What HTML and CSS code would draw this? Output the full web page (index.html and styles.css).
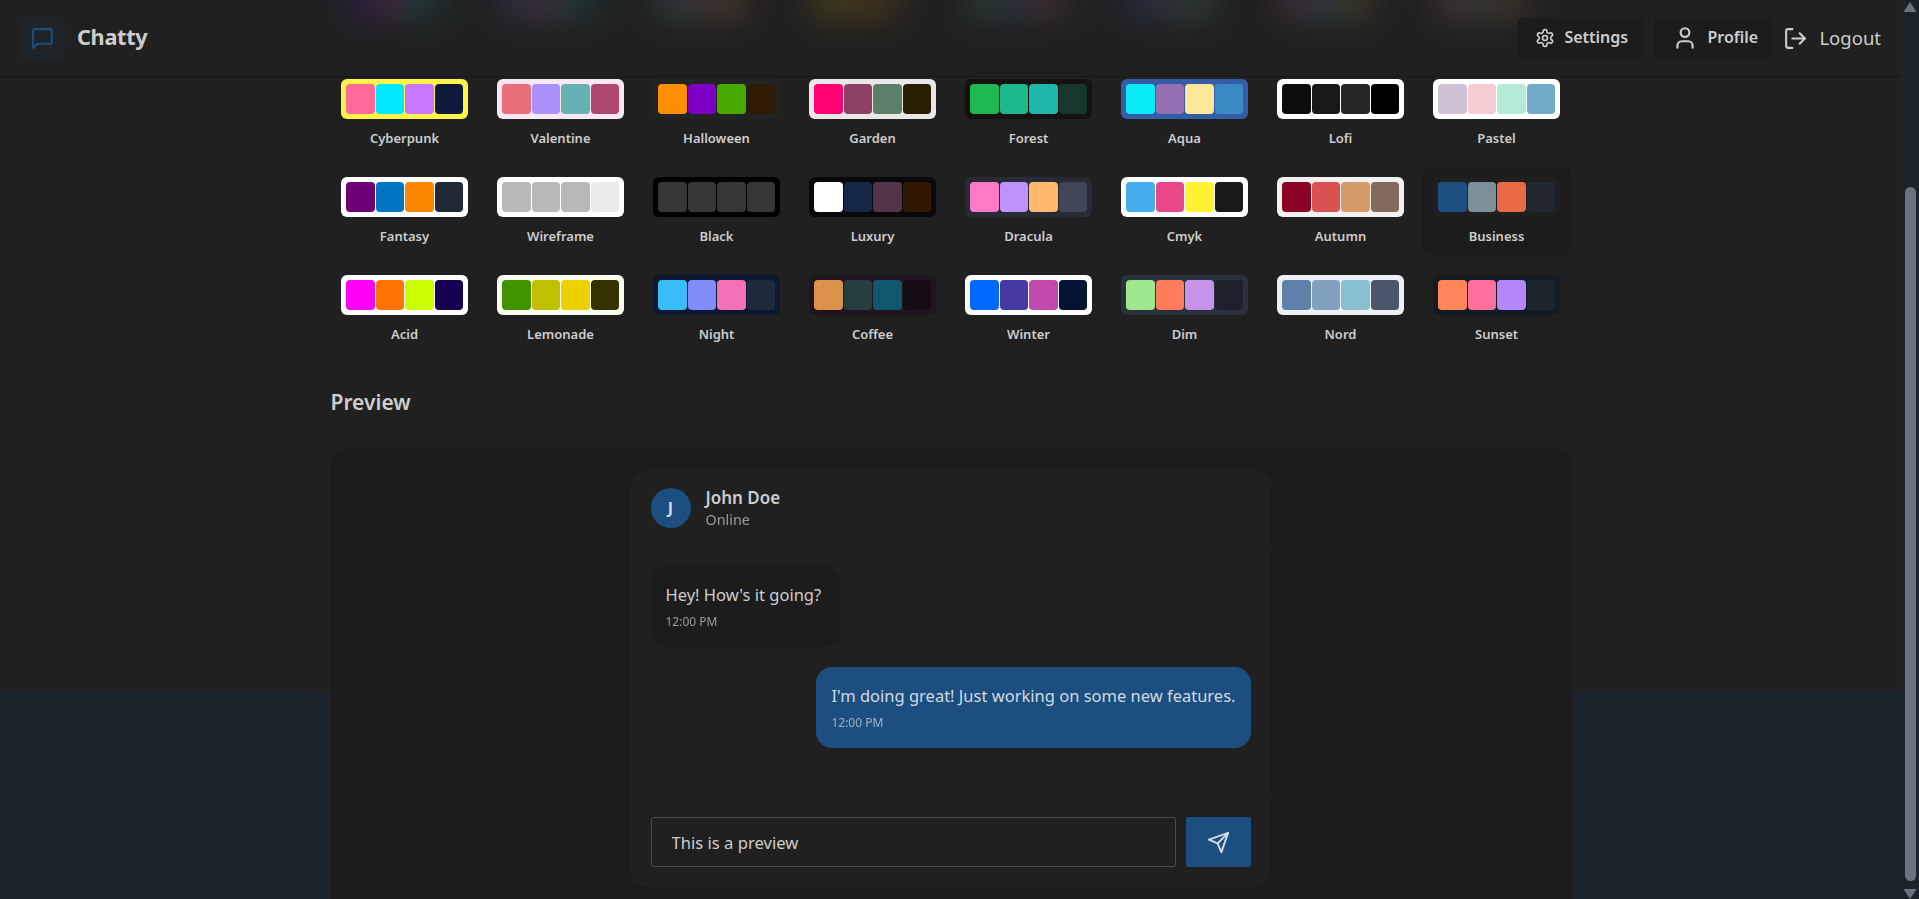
FILE: index.html
```html
<!DOCTYPE html>
<html lang="en">
<head>
    <meta charset="UTF-8">
    <meta name="viewport" content="width=device-width, initial-scale=1.0">
    <title>Chatty</title>
    <link rel="stylesheet" href="styles.css">
</head>
<body>
    <div class="window">
        <header class="navbar">
            <a class="brand" href="#">
                <span class="brand-icon">
                    <svg width="25" height="25" viewBox="0 0 24 24" fill="none" stroke="currentColor" stroke-width="2" stroke-linecap="round" stroke-linejoin="round"><path d="M21 15a2 2 0 0 1-2 2H7l-4 4V5a2 2 0 0 1 2-2h14a2 2 0 0 1 2 2z"/></svg>
                </span>
                <span class="brand-name">Chatty</span>
            </a>
            <nav class="nav-links">
                <a class="nav-btn nav-settings" href="#">
                    <svg width="20" height="20" viewBox="0 0 24 24" fill="none" stroke="currentColor" stroke-width="2" stroke-linecap="round" stroke-linejoin="round"><path d="M12.22 2h-.44a2 2 0 0 0-2 2v.18a2 2 0 0 1-1 1.73l-.43.25a2 2 0 0 1-2 0l-.15-.08a2 2 0 0 0-2.73.73l-.22.38a2 2 0 0 0 .73 2.73l.15.1a2 2 0 0 1 1 1.72v.51a2 2 0 0 1-1 1.74l-.15.09a2 2 0 0 0-.73 2.73l.22.38a2 2 0 0 0 2.73.73l.15-.08a2 2 0 0 1 2 0l.43.25a2 2 0 0 1 1 1.73V20a2 2 0 0 0 2 2h.44a2 2 0 0 0 2-2v-.18a2 2 0 0 1 1-1.73l.43-.25a2 2 0 0 1 2 0l.15.08a2 2 0 0 0 2.73-.73l.22-.39a2 2 0 0 0-.73-2.73l-.15-.08a2 2 0 0 1-1-1.74v-.5a2 2 0 0 1 1-1.74l.15-.09a2 2 0 0 0 .73-2.73l-.22-.38a2 2 0 0 0-2.73-.73l-.15.08a2 2 0 0 1-2 0l-.43-.25a2 2 0 0 1-1-1.73V4a2 2 0 0 0-2-2z"/><circle cx="12" cy="12" r="3"/></svg>
                    <span>Settings</span>
                </a>
                <a class="nav-btn nav-profile" href="#">
                    <svg width="26" height="26" viewBox="0 0 24 24" fill="none" stroke="currentColor" stroke-width="2" stroke-linecap="round" stroke-linejoin="round"><path d="M19 21v-2a4 4 0 0 0-4-4H9a4 4 0 0 0-4 4v2"/><circle cx="12" cy="7" r="4"/></svg>
                    <span>Profile</span>
                </a>
                <a class="nav-logout" href="#">
                    <svg width="25" height="25" viewBox="0 0 24 24" fill="none" stroke="currentColor" stroke-width="2" stroke-linecap="round" stroke-linejoin="round"><path d="M9 21H5a2 2 0 0 1-2-2V5a2 2 0 0 1 2-2h4"/><polyline points="16 17 21 12 16 7"/><line x1="21" y1="12" x2="9" y2="12"/></svg>
                    <span>Logout</span>
                </a>
            </nav>
        </header>

        <main class="content">
            <!-- row scrolled away under the navbar, only its blur is visible -->
            <div class="theme-grid theme-grid-under" aria-hidden="true">
                <div class="theme theme-light"><span class="swatch"><i></i><i></i><i></i><i></i></span><span class="theme-name"></span></div>
                <div class="theme theme-dark"><span class="swatch"><i></i><i></i><i></i><i></i></span><span class="theme-name"></span></div>
                <div class="theme theme-cupcake"><span class="swatch"><i></i><i></i><i></i><i></i></span><span class="theme-name"></span></div>
                <div class="theme theme-bumblebee"><span class="swatch"><i></i><i></i><i></i><i></i></span><span class="theme-name"></span></div>
                <div class="theme theme-emerald"><span class="swatch"><i></i><i></i><i></i><i></i></span><span class="theme-name"></span></div>
                <div class="theme theme-corporate"><span class="swatch"><i></i><i></i><i></i><i></i></span><span class="theme-name"></span></div>
                <div class="theme theme-synthwave"><span class="swatch"><i></i><i></i><i></i><i></i></span><span class="theme-name"></span></div>
                <div class="theme theme-retro"><span class="swatch"><i></i><i></i><i></i><i></i></span><span class="theme-name"></span></div>
            </div>
            <div class="theme-grid">
                <div class="theme theme-cyberpunk"><span class="swatch"><i></i><i></i><i></i><i></i></span><span class="theme-name">Cyberpunk</span></div>
                <div class="theme theme-valentine"><span class="swatch"><i></i><i></i><i></i><i></i></span><span class="theme-name">Valentine</span></div>
                <div class="theme theme-halloween"><span class="swatch"><i></i><i></i><i></i><i></i></span><span class="theme-name">Halloween</span></div>
                <div class="theme theme-garden"><span class="swatch"><i></i><i></i><i></i><i></i></span><span class="theme-name">Garden</span></div>
                <div class="theme theme-forest"><span class="swatch"><i></i><i></i><i></i><i></i></span><span class="theme-name">Forest</span></div>
                <div class="theme theme-aqua"><span class="swatch"><i></i><i></i><i></i><i></i></span><span class="theme-name">Aqua</span></div>
                <div class="theme theme-lofi"><span class="swatch"><i></i><i></i><i></i><i></i></span><span class="theme-name">Lofi</span></div>
                <div class="theme theme-pastel"><span class="swatch"><i></i><i></i><i></i><i></i></span><span class="theme-name">Pastel</span></div>
                <div class="theme theme-fantasy"><span class="swatch"><i></i><i></i><i></i><i></i></span><span class="theme-name">Fantasy</span></div>
                <div class="theme theme-wireframe"><span class="swatch"><i></i><i></i><i></i><i></i></span><span class="theme-name">Wireframe</span></div>
                <div class="theme theme-black"><span class="swatch"><i></i><i></i><i></i><i></i></span><span class="theme-name">Black</span></div>
                <div class="theme theme-luxury"><span class="swatch"><i></i><i></i><i></i><i></i></span><span class="theme-name">Luxury</span></div>
                <div class="theme theme-dracula"><span class="swatch"><i></i><i></i><i></i><i></i></span><span class="theme-name">Dracula</span></div>
                <div class="theme theme-cmyk"><span class="swatch"><i></i><i></i><i></i><i></i></span><span class="theme-name">Cmyk</span></div>
                <div class="theme theme-autumn"><span class="swatch"><i></i><i></i><i></i><i></i></span><span class="theme-name">Autumn</span></div>
                <div class="theme theme-business active"><span class="swatch"><i></i><i></i><i></i><i></i></span><span class="theme-name">Business</span></div>
                <div class="theme theme-acid"><span class="swatch"><i></i><i></i><i></i><i></i></span><span class="theme-name">Acid</span></div>
                <div class="theme theme-lemonade"><span class="swatch"><i></i><i></i><i></i><i></i></span><span class="theme-name">Lemonade</span></div>
                <div class="theme theme-night"><span class="swatch"><i></i><i></i><i></i><i></i></span><span class="theme-name">Night</span></div>
                <div class="theme theme-coffee"><span class="swatch"><i></i><i></i><i></i><i></i></span><span class="theme-name">Coffee</span></div>
                <div class="theme theme-winter"><span class="swatch"><i></i><i></i><i></i><i></i></span><span class="theme-name">Winter</span></div>
                <div class="theme theme-dim"><span class="swatch"><i></i><i></i><i></i><i></i></span><span class="theme-name">Dim</span></div>
                <div class="theme theme-nord"><span class="swatch"><i></i><i></i><i></i><i></i></span><span class="theme-name">Nord</span></div>
                <div class="theme theme-sunset"><span class="swatch"><i></i><i></i><i></i><i></i></span><span class="theme-name">Sunset</span></div>
            </div>

            <h3 class="preview-title">Preview</h3>

            <section class="preview-panel">
                <div class="chat-card">
                    <div class="chat-header">
                        <div class="avatar">J</div>
                        <div>
                            <div class="chat-user">John Doe</div>
                            <div class="chat-status">Online</div>
                        </div>
                    </div>
                    <div class="chat-messages">
                        <div class="bubble">
                            <p>Hey! How's it going?</p>
                            <span class="bubble-time">12:00 PM</span>
                        </div>
                        <div class="bubble bubble-sent">
                            <p>I'm doing great! Just working on some new features.</p>
                            <span class="bubble-time">12:00 PM</span>
                        </div>
                    </div>
                    <div class="chat-input">
                        <input type="text" value="This is a preview" readonly>
                        <button class="send-btn" type="button">
                            <svg width="23" height="23" viewBox="0 0 24 24" fill="none" stroke="currentColor" stroke-width="2" stroke-linecap="round" stroke-linejoin="round"><path d="m22 2-7 20-4-9-9-4Z"/><path d="M22 2 11 13"/></svg>
                        </button>
                    </div>
                </div>
            </section>
        </main>
    </div>

    <div class="scrollbar" aria-hidden="true">
        <span class="scroll-up"></span>
        <span class="scroll-thumb"></span>
        <span class="scroll-down"></span>
    </div>
</body>
</html>
```

FILE: styles.css
```css
* {
    box-sizing: border-box;
}
body {
    display: flex;
    height: 899px;
    margin: 0;
    overflow: hidden;
    background: #1d232a;
    color: #cdcdcd;
    font-family: "Noto Sans", "Open Sans", sans-serif;
}
a {
    color: inherit;
    text-decoration: none;
}
p {
    margin: 0;
}

/* page area: the base colour stops at 690px, the panel runs past it */
.window {
    position: relative;
    flex: 1;
    height: 100%;
    overflow: hidden;
    background: linear-gradient(#202020 690px, transparent 690px);
}

.navbar {
    position: absolute;
    top: 0;
    left: 0;
    right: 0;
    z-index: 10;
    display: flex;
    align-items: center;
    justify-content: space-between;
    height: 77px;
    padding: 0 20px;
    background: rgba(32, 32, 32, 0.8);
    border-bottom: 1px solid #181818;
}
.brand {
    display: flex;
    align-items: center;
    gap: 12px;
}
.brand-icon {
    display: flex;
    align-items: center;
    justify-content: center;
    width: 45px;
    height: 45px;
    border-radius: 10px;
    background: rgba(28, 78, 128, 0.1);
    color: #1c4e80;
}
.brand-name {
    padding-bottom: 4px;
    font-size: 21.7px;
    font-weight: 700;
    letter-spacing: -0.3px;
}
.nav-links {
    display: flex;
    align-items: center;
    gap: 10px;
}
.nav-btn {
    display: flex;
    align-items: center;
    height: 40px;
    border-radius: 4px;
    background: #1c1c1c;
    font-size: 16px;
    font-weight: 600;
}
.nav-btn span,
.nav-logout span {
    padding-bottom: 2px;
}
.nav-settings {
    width: 126px;
    gap: 9px;
    padding-left: 17px;
}
.nav-profile {
    width: 119px;
    gap: 9px;
    padding-left: 18px;
}
.nav-logout {
    display: flex;
    align-items: center;
    gap: 11px;
    font-size: 18.5px;
}

.content {
    width: 1240px;
    margin: -29px auto 0;
}
.theme-grid {
    display: grid;
    grid-template-columns: repeat(8, 148px);
    gap: 10px 8px;
    margin-bottom: 10px;
}
.theme {
    display: flex;
    flex-direction: column;
    align-items: center;
    gap: 9px;
    padding: 10px 10.5px 8px;
    border-radius: 8px;
}
.theme.active {
    background: #1c1c1c;
}
.swatch {
    display: grid;
    grid-template-columns: repeat(4, 1fr);
    gap: 1px;
    width: 100%;
    height: 40px;
    padding: 5px;
    border-radius: 6px;
    background: var(--bg);
}
.swatch i {
    border-radius: 4px;
}
.swatch i:nth-child(1) { background: var(--p); }
.swatch i:nth-child(2) { background: var(--s); }
.swatch i:nth-child(3) { background: var(--a); }
.swatch i:nth-child(4) { background: var(--n); }
.theme-name {
    height: 21px;
    font-size: 13px;
    font-weight: 600;
    line-height: 21px;
}
/* hidden row, melted into the glow behind the navbar */
.theme-grid-under {
    filter: blur(16px);
}
.theme-grid-under .swatch {
    background: none;
}

/* theme colours */
.theme-light { --p: #491eff; --s: #ff41c7; --a: #00cfbd; --n: #2b3440; }
.theme-dark { --p: #7582ff; --s: #ff71cf; --a: #00c7b5; --n: #2a323c; }
.theme-cupcake { --p: #65c3c8; --s: #ef9fbc; --a: #eeaf3a; --n: #291334; }
.theme-bumblebee { --p: #ffd900; --s: #ffa400; --a: #e08300; --n: #181830; }
.theme-emerald { --p: #66cc8a; --s: #377cfb; --a: #f68067; --n: #333c4d; }
.theme-corporate { --p: #4b6bfb; --s: #7b92b2; --a: #67cba0; --n: #181a2a; }
.theme-synthwave { --p: #e779c1; --s: #58c7f3; --a: #f3cc30; --n: #20134e; }
.theme-retro { --p: #ef9995; --s: #a4cbb4; --a: #dc8850; --n: #2e282a; }
.theme-cyberpunk { --bg: #fff248; --p: #ff6a9a; --s: #00e8ff; --a: #c875ff; --n: #111a3c; }
.theme-valentine { --bg: #fae7f4; --p: #e96d7b; --s: #a991f7; --a: #66b1b3; --n: #af4670; }
.theme-halloween { --bg: #232323; --p: #ff8f00; --s: #7d00c4; --a: #47a800; --n: #2f1b05; }
.theme-garden { --bg: #e9e7e7; --p: #ff0070; --s: #8e4162; --a: #5c7f67; --n: #291e00; }
.theme-forest { --bg: #171212; --p: #1eb854; --s: #1db88e; --a: #1db8ab; --n: #19362d; }
.theme-aqua { --bg: #345da7; --p: #09ecf3; --s: #966fb3; --a: #ffe999; --n: #3b8ac4; }
.theme-lofi { --bg: #ffffff; --p: #0d0d0d; --s: #1a1919; --a: #262626; --n: #000000; }
.theme-pastel { --bg: #ffffff; --p: #d1c1d7; --s: #f6cbd1; --a: #b4e9d6; --n: #70acc7; }
.theme-fantasy { --bg: #ffffff; --p: #6d0076; --s: #0075c2; --a: #ff8600; --n: #1f2937; }
.theme-wireframe { --bg: #ffffff; --p: #b8b8b8; --s: #b8b8b8; --a: #b8b8b8; --n: #ebebeb; }
.theme-black { --bg: #000000; --p: #373737; --s: #373737; --a: #373737; --n: #373737; }
.theme-luxury { --bg: #09090b; --p: #ffffff; --s: #152747; --a: #513448; --n: #331800; }
.theme-dracula { --bg: #282a36; --p: #ff79c6; --s: #bd93f9; --a: #ffb86c; --n: #414558; }
.theme-cmyk { --bg: #ffffff; --p: #45aeee; --s: #e8488a; --a: #fff232; --n: #1a1a1a; }
.theme-autumn { --bg: #f1f1f1; --p: #8c0327; --s: #d85251; --a: #d59b6a; --n: #826a5c; }
.theme-business { --bg: #1f1f1f; --p: #1c4e80; --s: #7c909a; --a: #ea6947; --n: #23282e; }
.theme-acid { --bg: #ffffff; --p: #ff00f4; --s: #ff7400; --a: #cbfd03; --n: #140152; }
.theme-lemonade { --bg: #fbfdf0; --p: #419400; --s: #bfc000; --a: #edd000; --n: #343300; }
.theme-night { --bg: #0c1830; --p: #38bdf8; --s: #818cf8; --a: #f471b5; --n: #1e293b; }
.theme-coffee { --bg: #20161f; --p: #db924b; --s: #263e3f; --a: #10576d; --n: #150c14; }
.theme-winter { --bg: #ffffff; --p: #0069ff; --s: #463aa2; --a: #c148ac; --n: #021431; }
.theme-dim { --bg: #2a303c; --p: #9fe88d; --s: #ff7d5c; --a: #c792e9; --n: #1c212b; }
.theme-nord { --bg: #eceff4; --p: #5e81ac; --s: #81a1c1; --a: #88c0d0; --n: #4c566a; }
.theme-sunset { --bg: #121c22; --p: #ff865b; --s: #fd6f9c; --a: #b387fa; --n: #1b262c; }

.preview-title {
    margin: 35px 0 32px;
    font-size: 21px;
    font-weight: 600;
    line-height: 28px;
}
.preview-panel {
    display: flex;
    justify-content: center;
    height: 480px;
    padding-top: 21px;
    border: 1px solid #1b1b1b;
    border-radius: 16px 16px 0 0;
    background: #1c1c1c;
}
.chat-card {
    width: 640px;
    height: 417px;
    border-radius: 16px;
    background: #202020;
}
.chat-header {
    display: flex;
    align-items: center;
    gap: 15px;
    height: 76px;
    padding: 0 20px;
    border-bottom: 1px solid #1b1b1b;
}
.avatar {
    display: flex;
    align-items: center;
    justify-content: center;
    width: 40px;
    height: 40px;
    border-radius: 50%;
    background: #1c4e80;
    color: #d2dae3;
    font-size: 16px;
    font-weight: 700;
}
.chat-user {
    font-size: 17px;
    font-weight: 600;
    line-height: 24px;
}
.chat-status {
    font-size: 14.3px;
    line-height: 20px;
    opacity: 0.7;
}
.chat-messages {
    display: flex;
    flex-direction: column;
    align-items: flex-start;
    gap: 20px;
    height: 251px;
    padding: 20px;
    border-bottom: 1px solid #1b1b1b;
}
.bubble {
    min-width: 189px;
    height: 81px;
    padding: 17px 15px 0;
    border-radius: 16px;
    background: #1c1c1c;
    font-size: 16.5px;
}
.bubble p {
    line-height: 24px;
}
.bubble-time {
    display: block;
    margin-top: 7px;
    font-size: 12px;
    line-height: 16px;
    opacity: 0.7;
}
.bubble-sent {
    align-self: flex-end;
    background: #1c4e80;
    color: #d2dae3;
}
.chat-input {
    display: flex;
    gap: 10px;
    padding: 20px;
}
.chat-input input {
    flex: 1;
    min-width: 0;
    height: 50px;
    padding: 0 20px;
    border: 1px solid #4a4a4a;
    border-radius: 3px;
    outline: none;
    background: #202020;
    color: #cdcdcd;
    font-family: inherit;
    font-size: 16.6px;
}
.send-btn {
    display: flex;
    flex: 0 0 65px;
    align-items: center;
    justify-content: center;
    height: 50px;
    padding: 0;
    border: none;
    border-radius: 2px;
    background: #1c4e80;
    color: #d2dae3;
}

.scrollbar {
    display: flex;
    flex-direction: column;
    align-items: center;
    flex: 0 0 18px;
    height: 100%;
}
.scroll-up,
.scroll-down {
    width: 13px;
    height: 10px;
    background: #6b7280;
}
.scroll-up {
    margin-top: 2px;
    clip-path: polygon(50% 0, 100% 100%, 0 100%);
}
.scroll-thumb {
    width: 11px;
    height: 698px;
    margin-top: 175px;
    border-radius: 6px;
    background: #6b7280;
}
.scroll-down {
    margin-top: 8px;
    clip-path: polygon(0 0, 100% 0, 50% 100%);
}
```
